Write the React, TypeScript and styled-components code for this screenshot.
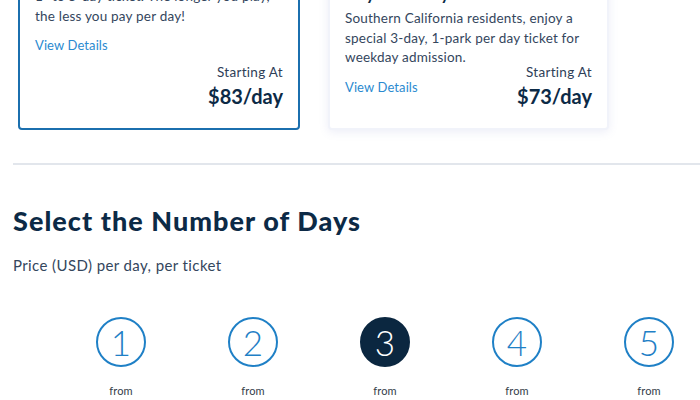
import styled, { createGlobalStyle } from "styled-components";

const GlobalStyle = createGlobalStyle`
  html, body {
    margin: 0;
    padding: 0;
    background: #ffffff;
    overflow: hidden;
  }
  body {
    font-family: Lato, "Open Sans", Arial, sans-serif;
    color: #253b56;
  }
  * {
    box-sizing: border-box;
  }
`;

// the page is photographed scrolled down a little
const Page = styled.div`
  width: 700px;
  margin-top: -57px;
  padding-left: 13px;
`;

const Cards = styled.div`
  display: grid;
  grid-template-columns: 282px 281px;
  gap: 28px;
  padding-left: 5px;
`;

const Card = styled.div<{ selected: boolean }>`
  height: 187px;
  display: grid;
  grid-template-columns: 1fr auto;
  grid-template-rows: auto auto minmax(0, 1fr);
  padding: 16px 15px 19px 15px;
  background: #ffffff;
  border-radius: 4px;
  border: 2px solid ${({ selected }) => (selected ? "#1b6fae" : "#f1f3fa")};
  box-shadow: ${({ selected }) =>
    selected ? "none" : "0 2px 10px rgba(120, 130, 200, 0.14)"};
`;

const CardTitle = styled.h3`
  grid-column: 1 / 3;
  margin: 0 0 4px;
  font-size: 17px;
  line-height: 22px;
  font-weight: 700;
  color: #0c2a46;
`;

const CardText = styled.p`
  grid-column: 1 / 3;
  margin: 0;
  font-size: 13.5px;
  line-height: 19.5px;
  letter-spacing: 0.2px;
  color: #34465d;
`;

const DetailsLink = styled.a`
  grid-column: 1;
  grid-row: 3;
  align-self: start;
  margin-top: 10px;
  font-size: 13px;
  line-height: 19px;
  letter-spacing: 0.1px;
  color: #2b8ad0;
  text-decoration: none;
`;

const Price = styled.div`
  grid-column: 2;
  grid-row: 3;
  align-self: end;
  text-align: right;
`;

const PriceLabel = styled.div`
  font-size: 13.5px;
  line-height: 20px;
  letter-spacing: 0.3px;
  color: #2e4058;
`;

const PriceValue = styled.div`
  margin-top: 1px;
  font-size: 20px;
  line-height: 26px;
  font-weight: 700;
  color: #0c2a46;
`;

const Divider = styled.hr`
  margin: 33px 0 0;
  border: none;
  border-top: 2px solid #e2e6ec;
`;

const Heading = styled.h2`
  margin: 40px 0 0;
  font-size: 27px;
  line-height: 32px;
  font-weight: 900;
  letter-spacing: 1.05px;
  color: #0c2a46;
`;

const SubText = styled.p`
  margin: 18px 0 0;
  font-size: 15px;
  line-height: 20px;
  letter-spacing: 0.4px;
  color: #34465d;
`;

const Days = styled.div`
  display: flex;
  margin-top: 42px;
  padding-left: 42px;
`;

const Day = styled.div`
  flex: 0 0 132px;
  display: flex;
  flex-direction: column;
  align-items: center;
`;

const Circle = styled.div<{ active: boolean }>`
  width: 50px;
  height: 50px;
  border-radius: 50%;
  display: flex;
  align-items: center;
  justify-content: center;
  border: 2px solid ${({ active }) => (active ? "#0b2740" : "#1f80c6")};
  background: ${({ active }) => (active ? "#0b2740" : "#ffffff")};
  color: ${({ active }) => (active ? "#ffffff" : "#1f80c6")};
  font-size: 35px;
  font-weight: 300;
  line-height: 1;
`;

const From = styled.div`
  margin-top: 17px;
  font-size: 11px;
  line-height: 14px;
  letter-spacing: 0.2px;
  color: #333d4a;
`;

const cards = [
  {
    title: "1- to 5-Day Tickets",
    text: "1- to 5-day ticket. The longer you play, the less you pay per day!",
    price: "$83/day",
    selected: true,
  },
  {
    title: "Southern California Resident 3-Day Weekday Ticket",
    text: "Southern California residents, enjoy a special 3-day, 1-park per day ticket for weekday admission.",
    price: "$73/day",
    selected: false,
  },
];

const days = [1, 2, 3, 4, 5];

function App() {
  const selectedDay = 3;

  return (
    <>
      <GlobalStyle />
      <Page>
        <Cards>
          {cards.map((card) => (
            <Card key={card.title} selected={card.selected}>
              <CardTitle>{card.title}</CardTitle>
              <CardText>{card.text}</CardText>
              <DetailsLink href="#">View Details</DetailsLink>
              <Price>
                <PriceLabel>Starting At</PriceLabel>
                <PriceValue>{card.price}</PriceValue>
              </Price>
            </Card>
          ))}
        </Cards>

        <Divider />

        <Heading>Select the Number of Days</Heading>
        <SubText>Price (USD) per day, per ticket</SubText>

        <Days>
          {days.map((day) => (
            <Day key={day}>
              <Circle active={day === selectedDay}>{day}</Circle>
              <From>from</From>
            </Day>
          ))}
        </Days>
      </Page>
    </>
  );
}

export default App;
